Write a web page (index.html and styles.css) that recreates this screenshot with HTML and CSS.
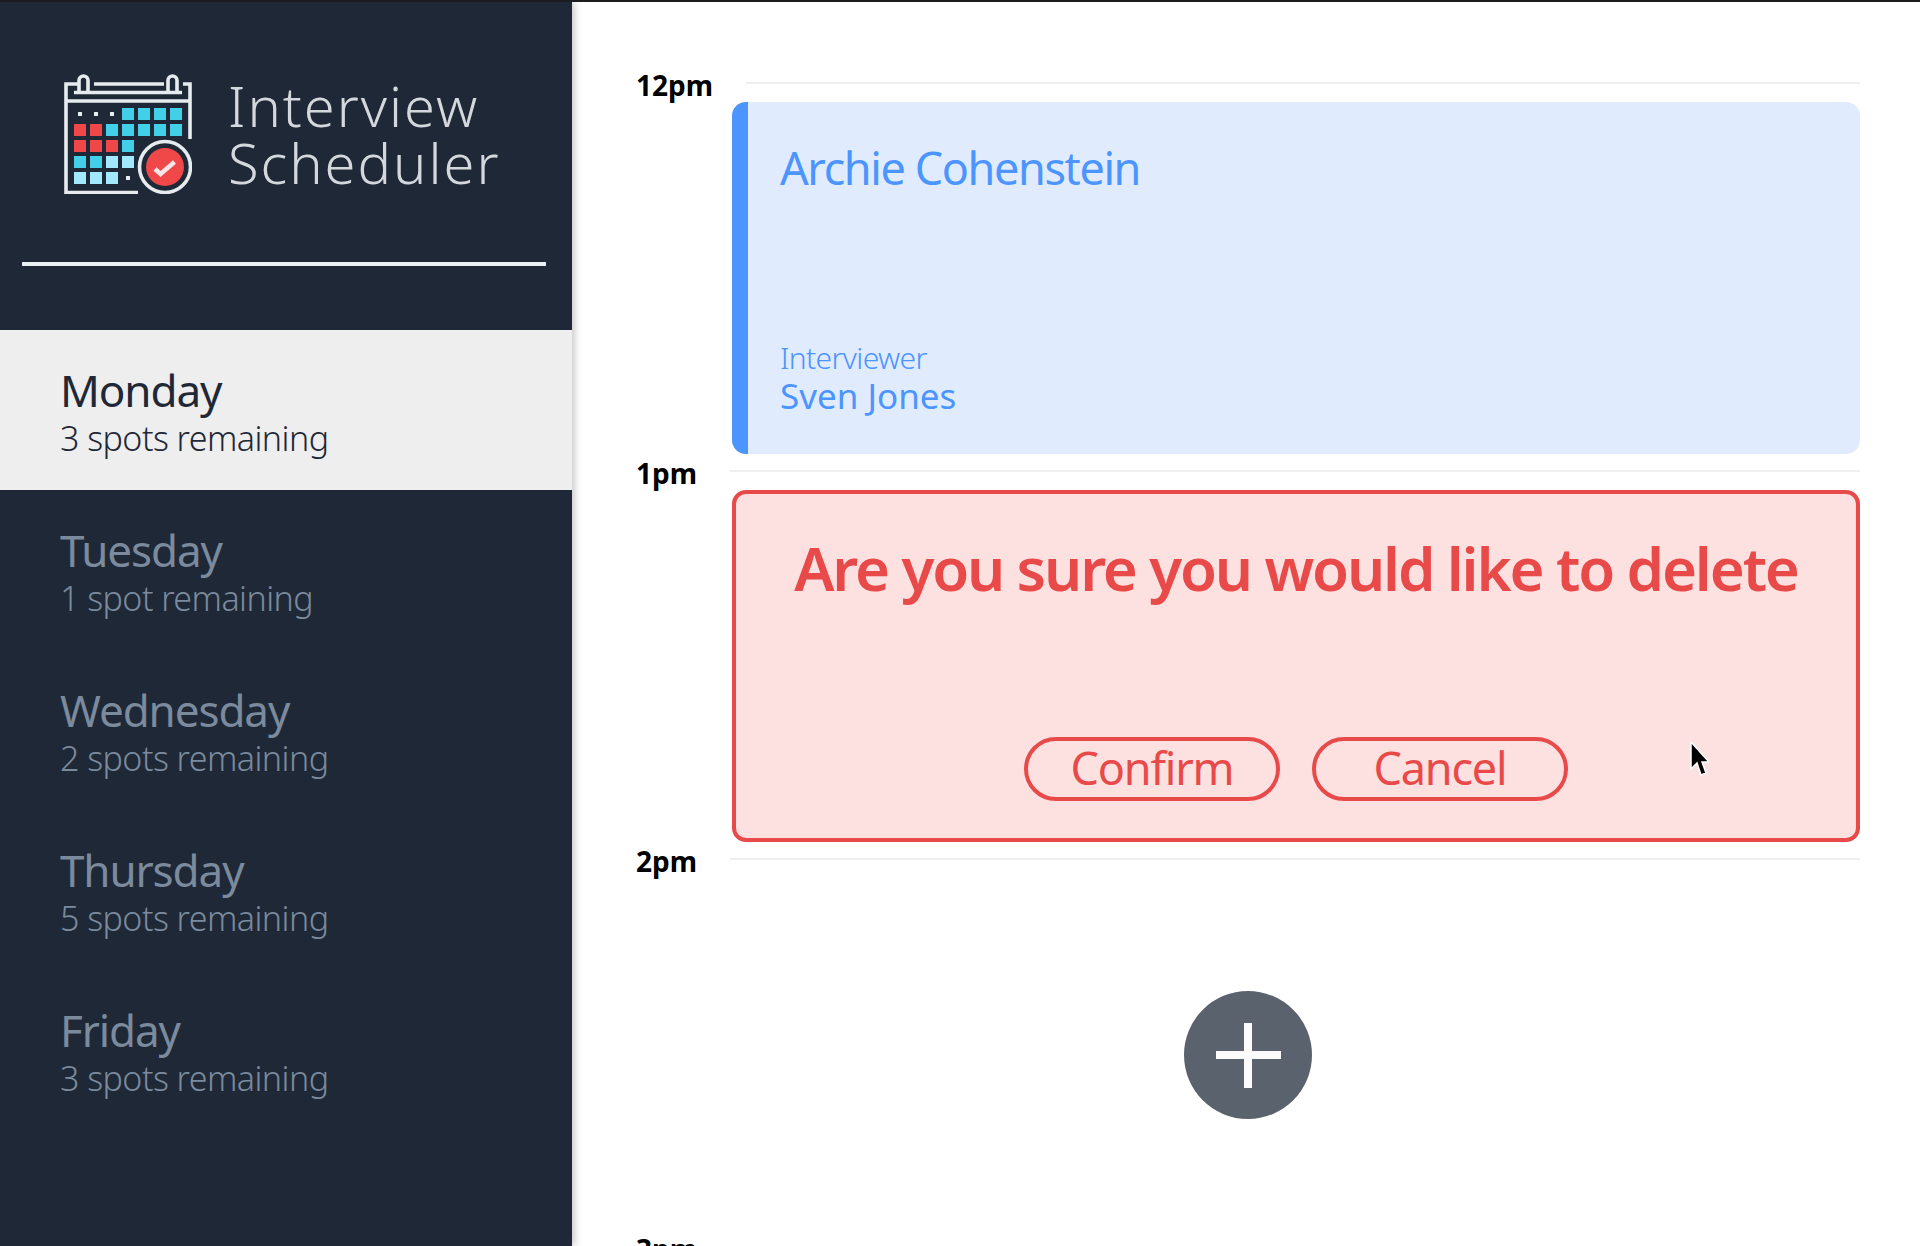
FILE: index.html
```html
<!DOCTYPE html>
<html lang="en">
<head>
<meta charset="UTF-8" />
<title>Interview Scheduler</title>
<link rel="stylesheet" href="styles.css">
</head>
<body>

<nav class="sidebar">
  <div class="brand">
    <svg class="brand-logo" viewBox="0 0 128 120" width="128" height="120">
      <g fill="none" stroke="#e6ebef" stroke-width="3.6">
        <path d="M126 65V10H119M14 10H2V118.5H74M2 27H126M10 18.5H118M30 10H100" />
        <path d="M15 18.5V6.5a4.5 4.5 0 0 1 9 0V18.5M104 18.5V6.5a4.5 4.5 0 0 1 9 0V18.5" />
        <circle cx="101" cy="93" r="25.5" />
      </g>
      <g fill="#44cfe8">
        <rect x="58" y="34" width="12" height="12" /><rect x="74" y="34" width="12" height="12" /><rect x="90" y="34" width="12" height="12" /><rect x="106" y="34" width="12" height="12" />
        <rect x="42" y="50" width="12" height="12" /><rect x="58" y="50" width="12" height="12" /><rect x="74" y="50" width="12" height="12" /><rect x="90" y="50" width="12" height="12" /><rect x="106" y="50" width="12" height="12" />
        <rect x="58" y="66" width="12" height="12" />
        <rect x="10" y="82" width="12" height="12" /><rect x="26" y="82" width="12" height="12" />
      </g>
      <g fill="#f04848">
        <rect x="10" y="50" width="12" height="12" /><rect x="26" y="50" width="12" height="12" />
        <rect x="10" y="66" width="12" height="12" /><rect x="26" y="66" width="12" height="12" /><rect x="42" y="66" width="12" height="12" />
        <circle cx="101" cy="93" r="19" />
      </g>
      <g fill="#a2e9fd">
        <rect x="42" y="82" width="12" height="12" /><rect x="58" y="82" width="12" height="12" />
        <rect x="10" y="98" width="12" height="12" /><rect x="26" y="98" width="12" height="12" /><rect x="42" y="98" width="12" height="12" />
      </g>
      <g fill="#e6ebef">
        <rect x="14" y="38" width="4" height="4" /><rect x="30" y="38" width="4" height="4" /><rect x="46" y="38" width="4" height="4" /><rect x="62" y="102" width="4" height="4" />
      </g>
      <path d="M91 95l5.5 5 14-12" fill="none" stroke="#f8e6e6" stroke-width="4.5" />
    </svg>
    <h1 class="brand-name">Interview<br />Scheduler</h1>
  </div>
  <hr class="sidebar-rule" />
  <ul class="days">
    <li class="day day-selected"><h2 class="day-name">Monday</h2><p class="day-spots">3 spots remaining</p></li>
    <li class="day"><h2 class="day-name">Tuesday</h2><p class="day-spots">1 spot remaining</p></li>
    <li class="day"><h2 class="day-name">Wednesday</h2><p class="day-spots">2 spots remaining</p></li>
    <li class="day"><h2 class="day-name">Thursday</h2><p class="day-spots">5 spots remaining</p></li>
    <li class="day"><h2 class="day-name">Friday</h2><p class="day-spots">3 spots remaining</p></li>
  </ul>
</nav>

<main class="schedule">
  <section class="slot">
    <header class="slot-head"><span class="slot-time">12pm</span><span class="slot-line"></span></header>
    <div class="card card-booked">
      <div class="student">Archie Cohenstein</div>
      <div class="interviewer-label">Interviewer</div>
      <div class="interviewer-name">Sven Jones</div>
    </div>
  </section>

  <section class="slot">
    <header class="slot-head"><span class="slot-time">1pm</span><span class="slot-line"></span></header>
    <div class="card card-confirm">
      <div class="confirm-text">Are you sure you would like to delete</div>
      <div class="confirm-actions">
        <button type="button" class="pill">Confirm</button>
        <button type="button" class="pill">Cancel</button>
      </div>
    </div>
  </section>

  <section class="slot">
    <header class="slot-head"><span class="slot-time">2pm</span><span class="slot-line"></span></header>
    <div class="card card-empty">
      <button type="button" class="add" aria-label="Add"><span class="add-plus"></span></button>
    </div>
  </section>

  <section class="slot">
    <header class="slot-head"><span class="slot-time">3pm</span><span class="slot-line"></span></header>
  </section>
</main>

<svg class="cursor" viewBox="0 0 20 36" width="20" height="36">
  <path d="M2 1V28L8 22L12 34L17 32L13 21H20Z" fill="#000" stroke="#fff" stroke-width="1.5" />
</svg>

</body>
</html>
```

FILE: styles.css
```css
* {
  box-sizing: border-box;
}
html, body {
  height: 100%;
}
body {
  margin: 0;
  display: flex;
  overflow: hidden;
  position: relative;
  border-top: 2px solid #1c1c1e;
  font-family: "Noto Sans", sans-serif;
  background-color: #fff;
}

/* sidebar */
.sidebar {
  flex: 0 0 572px;
  background-color: #1f2836;
  box-shadow: 2px 0 8px rgba(0, 0, 0, 0.25);
  position: relative;
}
.brand {
  display: flex;
  align-items: center;
  gap: 36px;
  padding: 72px 0 0 64px;
}
.brand-name {
  margin: 0;
  font-size: 56px;
  line-height: 57px;
  font-weight: 300;
  color: #d3d8dc;
  letter-spacing: 2px;
}
.sidebar-rule {
  margin: 68px 26px 0 22px;
  height: 4px;
  border: 0;
  background-color: #e8f0f4;
}
.days {
  list-style: none;
  margin: 64px 0 0;
  padding: 0;
}
.day {
  height: 160px;
  padding: 35px 0 0 60px;
  color: #7b8a9c;
}
.day-selected {
  background-color: #eeeeee;
  color: #1f2836;
}
.day-name {
  margin: 0;
  font-size: 44px;
  line-height: 51px;
  font-weight: 400;
  letter-spacing: -1.1px;
}
.day-spots {
  margin: 0;
  font-size: 34px;
  line-height: 44px;
  font-weight: 300;
  letter-spacing: -0.55px;
}

/* schedule */
.schedule {
  flex: 1;
  padding: 64px 60px 0 64px;
}
.slot-head {
  display: flex;
  align-items: center;
  gap: 33px;
  height: 34px;
}
.slot-time {
  font-size: 28px;
  font-weight: 700;
  color: #000;
  padding-top: 4px;
}
.slot-line {
  flex: 1;
  height: 2px;
  background-color: #efefef;
}
.card {
  margin: 2px 0 0 96px;
  height: 352px;
}
.card-booked {
  display: flex;
  flex-direction: column;
  padding: 35px 32px 26px;
  background-color: #e0ecfe;
  border-left: 16px solid #4c94fe;
  border-radius: 14px;
  color: #4c94fe;
}
.student {
  font-size: 45px;
  line-height: 62px;
  letter-spacing: -1.4px;
}
.interviewer-label {
  margin-top: auto;
  font-size: 30px;
  line-height: 38px;
  font-weight: 300;
  letter-spacing: -0.6px;
}
.interviewer-name {
  font-size: 35px;
  line-height: 38px;
  margin-bottom: 13px;
}
.card-confirm {
  display: flex;
  flex-direction: column;
  align-items: center;
  padding: 36px 0 0;
  background-color: #fde0e0;
  border: 4px solid #e84a4a;
  border-radius: 14px;
  color: #e84a4a;
}
.confirm-text {
  font-size: 60px;
  line-height: 76px;
  font-weight: 600;
  letter-spacing: -2.15px;
}
.confirm-actions {
  display: flex;
  gap: 32px;
  margin-top: 131px;
}
.pill {
  width: 256px;
  height: 64px;
  padding: 0 0 2px;
  border: 4px solid #e84a4a;
  border-radius: 32px;
  background: transparent;
  color: #e84a4a;
  font-family: inherit;
  font-size: 45px;
  line-height: 54px;
  letter-spacing: -1.2px;
}
.card-empty {
  margin-left: 0;
  padding-top: 2px;
  display: flex;
  align-items: center;
  justify-content: center;
}
.add {
  width: 128px;
  height: 128px;
  padding: 0;
  border: 0;
  border-radius: 50%;
  background-color: #5a626d;
  display: flex;
  align-items: center;
  justify-content: center;
}
.add-plus {
  width: 65px;
  height: 65px;
  background:
    linear-gradient(#fbfbfb, #fbfbfb) center / 8px 100% no-repeat,
    linear-gradient(#fbfbfb, #fbfbfb) center / 100% 8px no-repeat;
}

/* pointer left over the page by the screen capture */
.cursor {
  position: absolute;
  left: 1689px;
  top: 739px;
}
```
